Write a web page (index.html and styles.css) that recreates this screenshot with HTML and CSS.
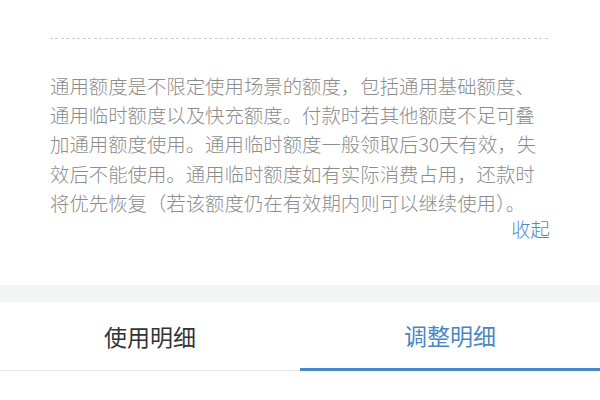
FILE: index.html
```html
<!DOCTYPE html>
<html lang="zh-CN">
<head>
    <meta charset="UTF-8">
    <meta name="viewport" content="width=device-width, initial-scale=1.0">
    <title>额度说明</title>
    <link rel="stylesheet" href="styles.css">
</head>
<body>
    <div class="quota">
        <div class="divider"></div>
        <p class="desc">通用额度是不限定使用场景的额度，包括通用基础额度、通用临时额度以及快充额度。付款时若其他额度不足可叠加通用额度使用。通用临时额度一般领取后30天有效，失效后不能使用。通用临时额度如有实际消费占用，还款时将优先恢复（若该额度仍在有效期内则可以继续使用）。</p>
        <div class="toggle"><a href="#">收起</a></div>
    </div>

    <div class="gap"></div>

    <div class="tabs">
        <div class="tab">使用明细</div>
        <div class="tab active">调整明细</div>
    </div>
</body>
</html>
```

FILE: styles.css
```css
body {
    margin: 0;
    background: #fff;
    font-family: "Noto Sans CJK SC", "Noto Sans", sans-serif;
}

.quota {
    padding: 38px 50px 44px;
}

.divider {
    height: 1px;
    background: repeating-linear-gradient(90deg, #cdcdcd 0 3px, transparent 3px 5.5px);
}

.desc {
    margin: 32px 0 0;
    font-size: 19.4px;
    font-weight: 300;
    line-height: 29.2px;
    color: #8c8c8c;
}

.toggle {
    text-align: right;
    font-size: 19.4px;
    font-weight: 300;
    line-height: 24px;
}

.toggle a {
    color: #4f8ac8;
    text-decoration: none;
}

.gap {
    height: 17px;
    background: #f3f4f6;
}

.tabs {
    display: flex;
}

.tab {
    flex: 1;
    box-sizing: border-box;
    height: 69px;
    display: flex;
    align-items: center;
    justify-content: center;
    font-size: 23px;
    color: #333;
    border-bottom: 1px solid #e6e6e6;
}

.tab.active {
    color: #4a86c4;
    border-bottom: 3px solid #4a88cc;
}
```
